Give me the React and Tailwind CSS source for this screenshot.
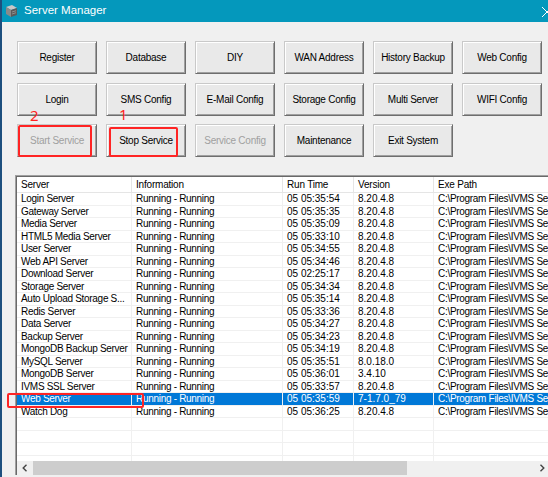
import React from "react";

const buttons = [
  { t: "Register" }, { t: "Database" }, { t: "DIY" }, { t: "WAN Address" }, { t: "History Backup" }, { t: "Web Config" },
  { t: "Login" }, { t: "SMS Config" }, { t: "E-Mail Config" }, { t: "Storage Config" }, { t: "Multi Server" }, { t: "WIFI Config" },
  { t: "Start Service", d: true }, { t: "Stop Service" }, { t: "Service Config", d: true }, { t: "Maintenance" }, { t: "Exit System" },
];

const rows = [
  ["Login Server", "05 05:35:54", "8.20.4.8"],
  ["Gateway Server", "05 05:35:35", "8.20.4.8"],
  ["Media Server", "05 05:35:09", "8.20.4.8"],
  ["HTML5 Media Server", "05 05:33:10", "8.20.4.8"],
  ["User Server", "05 05:34:55", "8.20.4.8"],
  ["Web API Server", "05 05:34:46", "8.20.4.8"],
  ["Download Server", "05 02:25:17", "8.20.4.8"],
  ["Storage Server", "05 05:34:34", "8.20.4.8"],
  ["Auto Upload Storage S...", "05 05:35:14", "8.20.4.8"],
  ["Redis Server", "05 05:33:36", "8.20.4.8"],
  ["Data Server", "05 05:34:27", "8.20.4.8"],
  ["Backup Server", "05 05:34:23", "8.20.4.8"],
  ["MongoDB Backup Server", "05 05:34:19", "8.20.4.8"],
  ["MySQL Server", "05 05:35:51", "8.0.18.0"],
  ["MongoDB Server", "05 05:36:01", "3.4.10"],
  ["IVMS SSL Server", "05 05:33:57", "8.20.4.8"],
  ["Web Server", "05 05:35:59", "7-1.7.0_79"],
  ["Watch Dog", "05 05:36:25", "8.20.4.8"],
];

const cols = "grid grid-cols-[115px_151px_71px_80px_200px]";

function Row({ r, sel }) {
  const base = sel ? "bg-[#0078d7] text-white" : "text-black";
  const cell = "px-[4px] border-r border-[#f0f0f0] whitespace-nowrap overflow-hidden";
  return (
    <div className={`${cols} h-[12.5px] leading-[12px] border-b border-[#f0f0f0] ${base}`}>
      <div className={`${cell} tracking-[-0.3px]`}>{r ? r[0] : ""}</div>
      <div className={`${cell} tracking-[-0.3px]`}>{r ? "Running - Running" : ""}</div>
      <div className={cell}>{r ? r[1] : ""}</div>
      <div className={cell}>{r ? r[2] : ""}</div>
      <div className={`${cell} tracking-[-0.3px]`}>{r ? "C:\\Program Files\\IVMS Server\\bin" : ""}</div>
    </div>
  );
}

export default function App() {
  return (
    <div className="w-[548px] h-[477px] overflow-hidden flex bg-[#f0f0f0] font-['Liberation_Sans',Arial,sans-serif] text-[10px]">
      <div className="w-[2px] shrink-0 bg-[#1d4f7e]" />
      <div className="flex-1 min-w-0 flex flex-col">
        {/* title bar */}
        <div className="h-[22px] shrink-0 bg-[#0498bc] flex items-center pl-[3px] relative">
          <svg width="13" height="14" viewBox="0 0 13 14" className="shrink-0">
            <polygon points="1,3 7,1 12,4 6,6" fill="#c8c8c8" />
            <polygon points="1,3 6,6 6,13 1,10" fill="#8a8a8a" />
            <polygon points="6,6 12,4 12,11 6,13" fill="#5a5a5a" />
            <line x1="7" y1="8" x2="11" y2="6.7" stroke="#9a9a9a" strokeWidth="0.8" />
            <line x1="7" y1="10" x2="11" y2="8.7" stroke="#9a9a9a" strokeWidth="0.8" />
          </svg>
          <span className="ml-[6px] text-white text-[11.5px] leading-none">Server Manager</span>
          <svg width="10" height="10" viewBox="0 0 10 10" className="absolute left-[540px] top-[7px]">
            <path d="M0 0 L10 10 M10 0 L0 10" stroke="#ffffff" strokeWidth="1" />
          </svg>
        </div>
        {/* body */}
        <div className="relative flex-1 pl-[13px] pt-[19px]">
          <div className="ml-[2px] grid grid-cols-[repeat(6,80px)] gap-x-[9px] gap-y-[8.5px] auto-rows-[33px]">
            {buttons.map((b) => (
              <div
                key={b.t}
                className={`flex items-center justify-center bg-[#e9e9e9] border border-t-[#c9c9c9] border-l-[#c9c9c9] border-r-[#6e6e6e] border-b-[#6e6e6e] shadow-[inset_1px_1px_0_#ffffff,inset_-1px_-1px_0_#a0a0a0] tracking-[-0.25px] whitespace-nowrap ${b.d ? "text-[#a0a0a0]" : "text-black"}`}
              >
                {b.t}
              </div>
            ))}
          </div>

          {/* list view */}
          <div className="mt-[18px] w-[535px] h-[300px] flex flex-col border-t border-l border-[#a0a0a0] bg-white">
            <div className="flex-1 flex flex-col border-t border-l border-[#696969] min-h-0">
              <div className={`${cols} h-[16px] shrink-0 leading-[16px] bg-white border-b border-[#e5e5e5] text-black`}>
                {["Server", "Information", "Run Time", "Version", "Exe Path"].map((h) => (
                  <div key={h} className="px-[4px] border-r border-[#e5e5e5] tracking-[-0.2px]">{h}</div>
                ))}
              </div>
              <div className="flex-1 min-h-0 overflow-hidden">
                {rows.map((r, i) => (
                  <Row key={i} r={r} sel={i === 16} />
                ))}
                {[0, 1, 2, 3, 4].map((i) => (
                  <Row key={"e" + i} />
                ))}
              </div>
              <div className="h-[14px] shrink-0 flex bg-[#f0f0f0]">
                <div className="w-[16px] flex items-center justify-center">
                  <svg width="6" height="8" viewBox="0 0 6 8"><path d="M4.5 0.8 L1.2 4 L4.5 7.2" stroke="#444" strokeWidth="1.4" fill="none" /></svg>
                </div>
                <div className="w-[374px] bg-[#cdcdcd]" />
                <div className="flex-1" />
                <div className="w-[17px] flex items-center justify-center">
                  <svg width="6" height="8" viewBox="0 0 6 8"><path d="M1.5 0.8 L4.8 4 L1.5 7.2" stroke="#444" strokeWidth="1.4" fill="none" /></svg>
                </div>
              </div>
            </div>
          </div>

          {/* annotations */}
          <div className="absolute left-[16px] top-[103px] w-[74px] h-[32px] border-2 border-[#ff2424] rounded-[2px]" />
          <div className="absolute left-[28px] top-[84px] text-[#ff2424] text-[15px] leading-[18px] font-['Noto_Sans',sans-serif]">2</div>
          <div className="absolute left-[107px] top-[105px] w-[69px] h-[30px] border-2 border-[#ff2424] rounded-[2px]" />
          <div className="absolute left-[117px] top-[83px] text-[#ff2424] text-[15px] leading-[18px] font-['Noto_Sans',sans-serif]">1</div>
          <div className="absolute left-[5px] top-[371px] w-[137px] h-[15px] border-2 border-[#ff2424] rounded-[2px]" />
        </div>
      </div>
    </div>
  );
}
